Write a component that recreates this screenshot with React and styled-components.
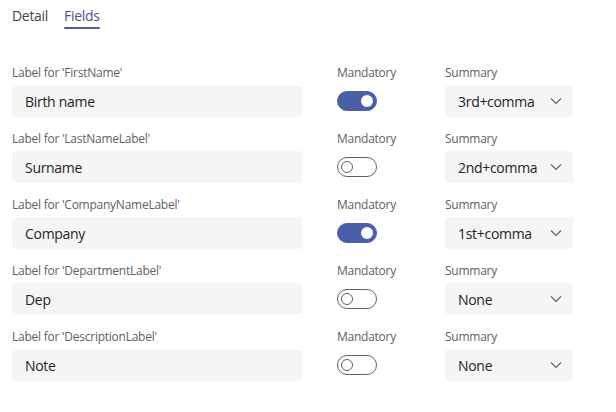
import React from "react";
import styled, { createGlobalStyle } from "styled-components";

const Global = createGlobalStyle`
  body {
    margin: 0;
    background: #fff;
    font-family: "Segoe UI", "Open Sans", sans-serif;
    color: #242424;
  }
`;

const rows = [
  { field: "FirstName", value: "Birth name", mandatory: true, summary: "3rd+comma" },
  { field: "LastNameLabel", value: "Surname", mandatory: false, summary: "2nd+comma" },
  { field: "CompanyNameLabel", value: "Company", mandatory: true, summary: "1st+comma" },
  { field: "DepartmentLabel", value: "Dep", mandatory: false, summary: "None" },
  { field: "DescriptionLabel", value: "Note", mandatory: false, summary: "None" },
];

const App = () => (
  <Page>
    <Global />
    <Tabs>
      <Tab>Detail</Tab>
      <Tab active>Fields</Tab>
    </Tabs>
    <List>
      {rows.map((r) => (
        <Row key={r.field}>
          <Field>
            <Label>Label for '{r.field}'</Label>
            <Input>{r.value}</Input>
          </Field>
          <Field>
            <Label>Mandatory</Label>
            <ToggleCell>
              <Toggle on={r.mandatory}>
                <Knob on={r.mandatory} />
              </Toggle>
            </ToggleCell>
          </Field>
          <Field>
            <Label>Summary</Label>
            <Select>
              <span>{r.summary}</span>
              <svg width="12" height="8" viewBox="0 0 12 8">
                <path d="M1 1.5 L6 6.5 L11 1.5" fill="none" stroke="#616161" strokeWidth="1.1" />
              </svg>
            </Select>
          </Field>
        </Row>
      ))}
    </List>
  </Page>
);

const Page = styled.div`
  padding: 0 12px;
  width: 561px;
`;

const Tabs = styled.div`
  display: flex;
  gap: 16px;
  height: 30px;
  align-items: flex-start;
  padding-top: 6px;
  box-sizing: border-box;
`;

const Tab = styled.div`
  position: relative;
  font-size: 14px;
  line-height: 20px;
  letter-spacing: -0.3px;
  color: ${(p) => (p.active ? "#4a4f8c" : "#484644")};

  &::after {
    content: "";
    display: ${(p) => (p.active ? "block" : "none")};
    position: absolute;
    left: 0;
    right: 0;
    top: 21px;
    height: 2px;
    border-radius: 1px;
    background: #4b5ea8;
  }
`;

const List = styled.div`
  display: flex;
  flex-direction: column;
  gap: 14px;
  margin-top: 35px;
`;

const Row = styled.div`
  display: grid;
  grid-template-columns: 290px 73px 128px;
  column-gap: 35px;
`;

const Field = styled.div`
  display: flex;
  flex-direction: column;
  gap: 4px;
`;

const Label = styled.div`
  font-size: 12px;
  line-height: 16px;
  letter-spacing: -0.25px;
  color: #616161;
  white-space: nowrap;
`;

const Input = styled.div`
  height: 32px;
  box-sizing: border-box;
  background: #f5f5f5;
  border-radius: 4px;
  padding: 0 13px;
  display: flex;
  align-items: center;
  font-size: 14px;
  letter-spacing: -0.3px;
  color: #242424;
`;

const ToggleCell = styled.div`
  height: 32px;
  display: flex;
  align-items: center;
`;

const Toggle = styled.div`
  width: 40px;
  height: 20px;
  box-sizing: border-box;
  border-radius: 10px;
  border: 1px solid ${(p) => (p.on ? "#4b5ea8" : "#616161")};
  background: ${(p) => (p.on ? "#4b5ea8" : "#fff")};
  display: flex;
  align-items: center;
  justify-content: ${(p) => (p.on ? "flex-end" : "flex-start")};
  padding: 0 3px;
`;

const Knob = styled.div`
  width: 12px;
  height: 12px;
  box-sizing: border-box;
  border-radius: 50%;
  background: #fff;
  border: ${(p) => (p.on ? "none" : "1px solid #616161")};
`;

const Select = styled.div`
  height: 32px;
  box-sizing: border-box;
  background: #f5f5f5;
  border-radius: 4px;
  padding: 0 11px 0 13px;
  display: flex;
  align-items: center;
  justify-content: space-between;
  font-size: 14px;
  letter-spacing: -0.3px;
  color: #242424;
`;

export default App;
